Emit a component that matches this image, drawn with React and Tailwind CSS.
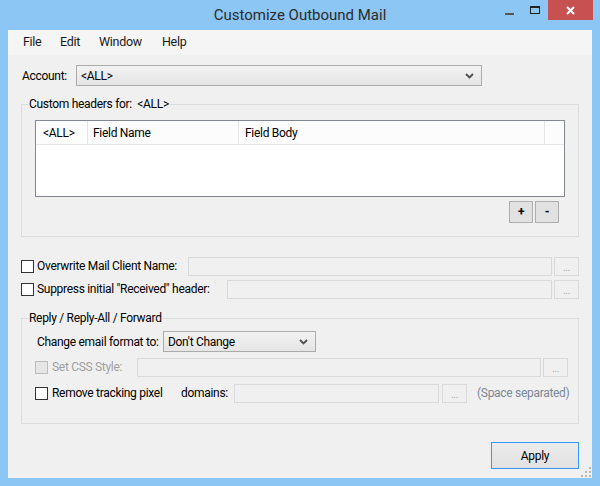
import React from 'react';

const font = { fontFamily: 'Roboto, "Noto Sans", sans-serif' };

function Check({ disabled }) {
  return (
    <span
      className={`inline-block w-[13px] h-[13px] border shrink-0 align-middle ${
        disabled ? 'border-[#bcbcbc] bg-[#e6e6e6]' : 'border-[#333333] bg-white'
      }`}
    />
  );
}

function TextBox({ w }) {
  return <div className={`h-[19px] border border-[#d9d9d9] bg-[#f0f0f0] shrink-0 ${w}`} />;
}

function DotsButton() {
  return (
    <div className="w-[25px] h-[19px] border border-[#d9d9d9] bg-[#f0f0f0] flex items-center justify-center text-[10px] text-[#a8a8a8] leading-none pt-[3px] shrink-0">
      ...
    </div>
  );
}

function Chevron() {
  return (
    <svg width="9" height="6" viewBox="0 0 9 6" className="shrink-0">
      <path d="M1 1 L4.5 4.5 L8 1" stroke="#505050" strokeWidth="1.8" fill="none" />
    </svg>
  );
}

function Combo({ w, value }) {
  return (
    <div
      className={`h-[21px] border border-[#acacac] bg-gradient-to-b from-[#f2f2f2] to-[#e5e5e5] flex items-center justify-between pl-[4px] pr-[7px] shrink-0 ${w}`}
    >
      <span className="whitespace-nowrap">{value}</span>
      <Chevron />
    </div>
  );
}

export default function App() {
  return (
    <div
      className="w-[600px] h-[486px] bg-[#8cc6f5] flex flex-col text-[12px] tracking-[-0.3px] text-black whitespace-nowrap"
      style={font}
    >
      {/* Title bar */}
      <div className="h-[30px] flex items-start relative">
        <div className="flex-1 text-center text-[15px] tracking-normal text-[#2b2b2b] leading-[30px]">Customize Outbound Mail</div>
        <div className="absolute right-[7px] top-0 flex items-start">
          <div className="w-[26px] h-[20px] flex items-center justify-center">
            <span className="block w-[9px] h-[2px] bg-[#555] mt-[8px]" />
          </div>
          <div className="w-[26px] h-[20px] flex items-center justify-center">
            <span className="block w-[10px] h-[8px] border border-[#222] border-t-2" />
          </div>
          <div className="w-[45px] h-[20px] bg-[#c75050] flex items-center justify-center">
            <svg width="9" height="9" viewBox="0 0 9 9">
              <path d="M1 1 L8 8 M8 1 L1 8" stroke="white" strokeWidth="2" />
            </svg>
          </div>
        </div>
      </div>

      {/* Client area */}
      <div className="mx-[8px] w-[584px] h-[448px] bg-[#f0f0f0] flex flex-col relative">
        {/* Menu */}
        <div className="h-[25px] bg-[#f5f5f5] flex items-center text-[12.5px] text-[#1a1a1a]">
          <span className="ml-[15px] w-[37px]">File</span>
          <span className="w-[39px]">Edit</span>
          <span className="w-[63px]">Window</span>
          <span>Help</span>
        </div>

        {/* Account */}
        <div className="mt-[10px] flex items-center h-[21px]">
          <span className="ml-[14px] w-[54px] shrink-0">Account:</span>
          <Combo w="w-[406px]" value="<ALL>" />
        </div>

        {/* Custom headers group */}
        <fieldset className="mt-[10px] ml-[13px] w-[558px] border border-[#dcdcdc] pb-[13px]">
          <legend className="ml-[6px] px-[1px] leading-[16px]">Custom headers for:&nbsp;&nbsp;&lt;ALL&gt;</legend>
          <div className="mt-[8px] ml-[13px] w-[530px] h-[77px] border border-[#828790] bg-white">
            <div className="h-[24px] flex border-b border-[#e5e5e5] bg-[#fcfcfc]">
              <div className="w-[52px] border-r border-[#e5e5e5] pl-[7px] leading-[25px]">&lt;ALL&gt;</div>
              <div className="w-[151px] border-r border-[#e5e5e5] pl-[5px] leading-[25px]">Field Name</div>
              <div className="w-[306px] border-r border-[#e5e5e5] pl-[6px] leading-[25px]">Field Body</div>
            </div>
          </div>
          <div className="mt-[4px] flex justify-end gap-[2px] mr-[19px]">
            <div className="w-[24px] h-[22px] border border-[#adadad] bg-[#e1e1e1] flex items-center justify-center font-bold">+</div>
            <div className="w-[24px] h-[22px] border border-[#adadad] bg-[#e1e1e1] flex items-center justify-center font-bold">-</div>
          </div>
        </fieldset>

        {/* Overwrite */}
        <div className="mt-[19px] h-[20px] flex items-center">
          <span className="ml-[13px] flex"><Check /></span>
          <span className="ml-[3px] w-[151px] shrink-0">Overwrite Mail Client Name:</span>
          <TextBox w="w-[364px]" />
          <span className="ml-[2px]"><DotsButton /></span>
        </div>
        <div className="mt-[3px] h-[20px] flex items-center">
          <span className="ml-[13px] flex"><Check /></span>
          <span className="ml-[3px] w-[190px] shrink-0">Suppress initial "Received" header:</span>
          <TextBox w="w-[325px]" />
          <span className="ml-[2px]"><DotsButton /></span>
        </div>

        {/* Reply group */}
        <fieldset className="mt-[11px] ml-[13px] w-[558px] h-[114px] border border-[#dcdcdc]">
          <legend className="ml-[6px] px-[1px] leading-[16px]">Reply / Reply-All / Forward</legend>
          <div className="mt-[5px] h-[21px] flex items-center">
            <span className="ml-[15px] w-[126px] shrink-0">Change email format to:</span>
            <Combo w="w-[153px]" value="Don't Change" />
          </div>
          <div className="mt-[5px] h-[20px] flex items-center">
            <span className="ml-[13px] flex"><Check disabled /></span>
            <span className="ml-[4px] w-[85px] shrink-0 text-[#a0a0a0]">Set CSS Style:</span>
            <TextBox w="w-[404px]" />
            <span className="ml-[2px]"><DotsButton /></span>
          </div>
          <div className="mt-[6px] h-[20px] flex items-center">
            <span className="ml-[13px] flex"><Check /></span>
            <span className="ml-[4px] w-[129px] shrink-0">Remove tracking pixel</span>
            <span className="w-[53px] shrink-0">domains:</span>
            <TextBox w="w-[205px]" />
            <span className="ml-[3px]"><DotsButton /></span>
            <span className="ml-[10px] text-[#7d8796]">(Space separated)</span>
          </div>
        </fieldset>

        {/* Apply */}
        <div className="mt-[18px] flex justify-end mr-[13px]">
          <div className="w-[88px] h-[27px] border border-[#3399ff] bg-gradient-to-b from-[#ececec] to-[#e1e1e1] flex items-center justify-center">
            Apply
          </div>
        </div>

        {/* Resize grip */}
        <svg width="10" height="10" viewBox="0 0 10 10" className="absolute right-[1px] bottom-[1px]">
          {[[8, 0], [8, 4], [4, 4], [8, 8], [4, 8], [0, 8]].map(([x, y], i) => (
            <rect key={i} x={x} y={y} width="2" height="2" fill="#b8b8b8" />
          ))}
        </svg>
      </div>
    </div>
  );
}
